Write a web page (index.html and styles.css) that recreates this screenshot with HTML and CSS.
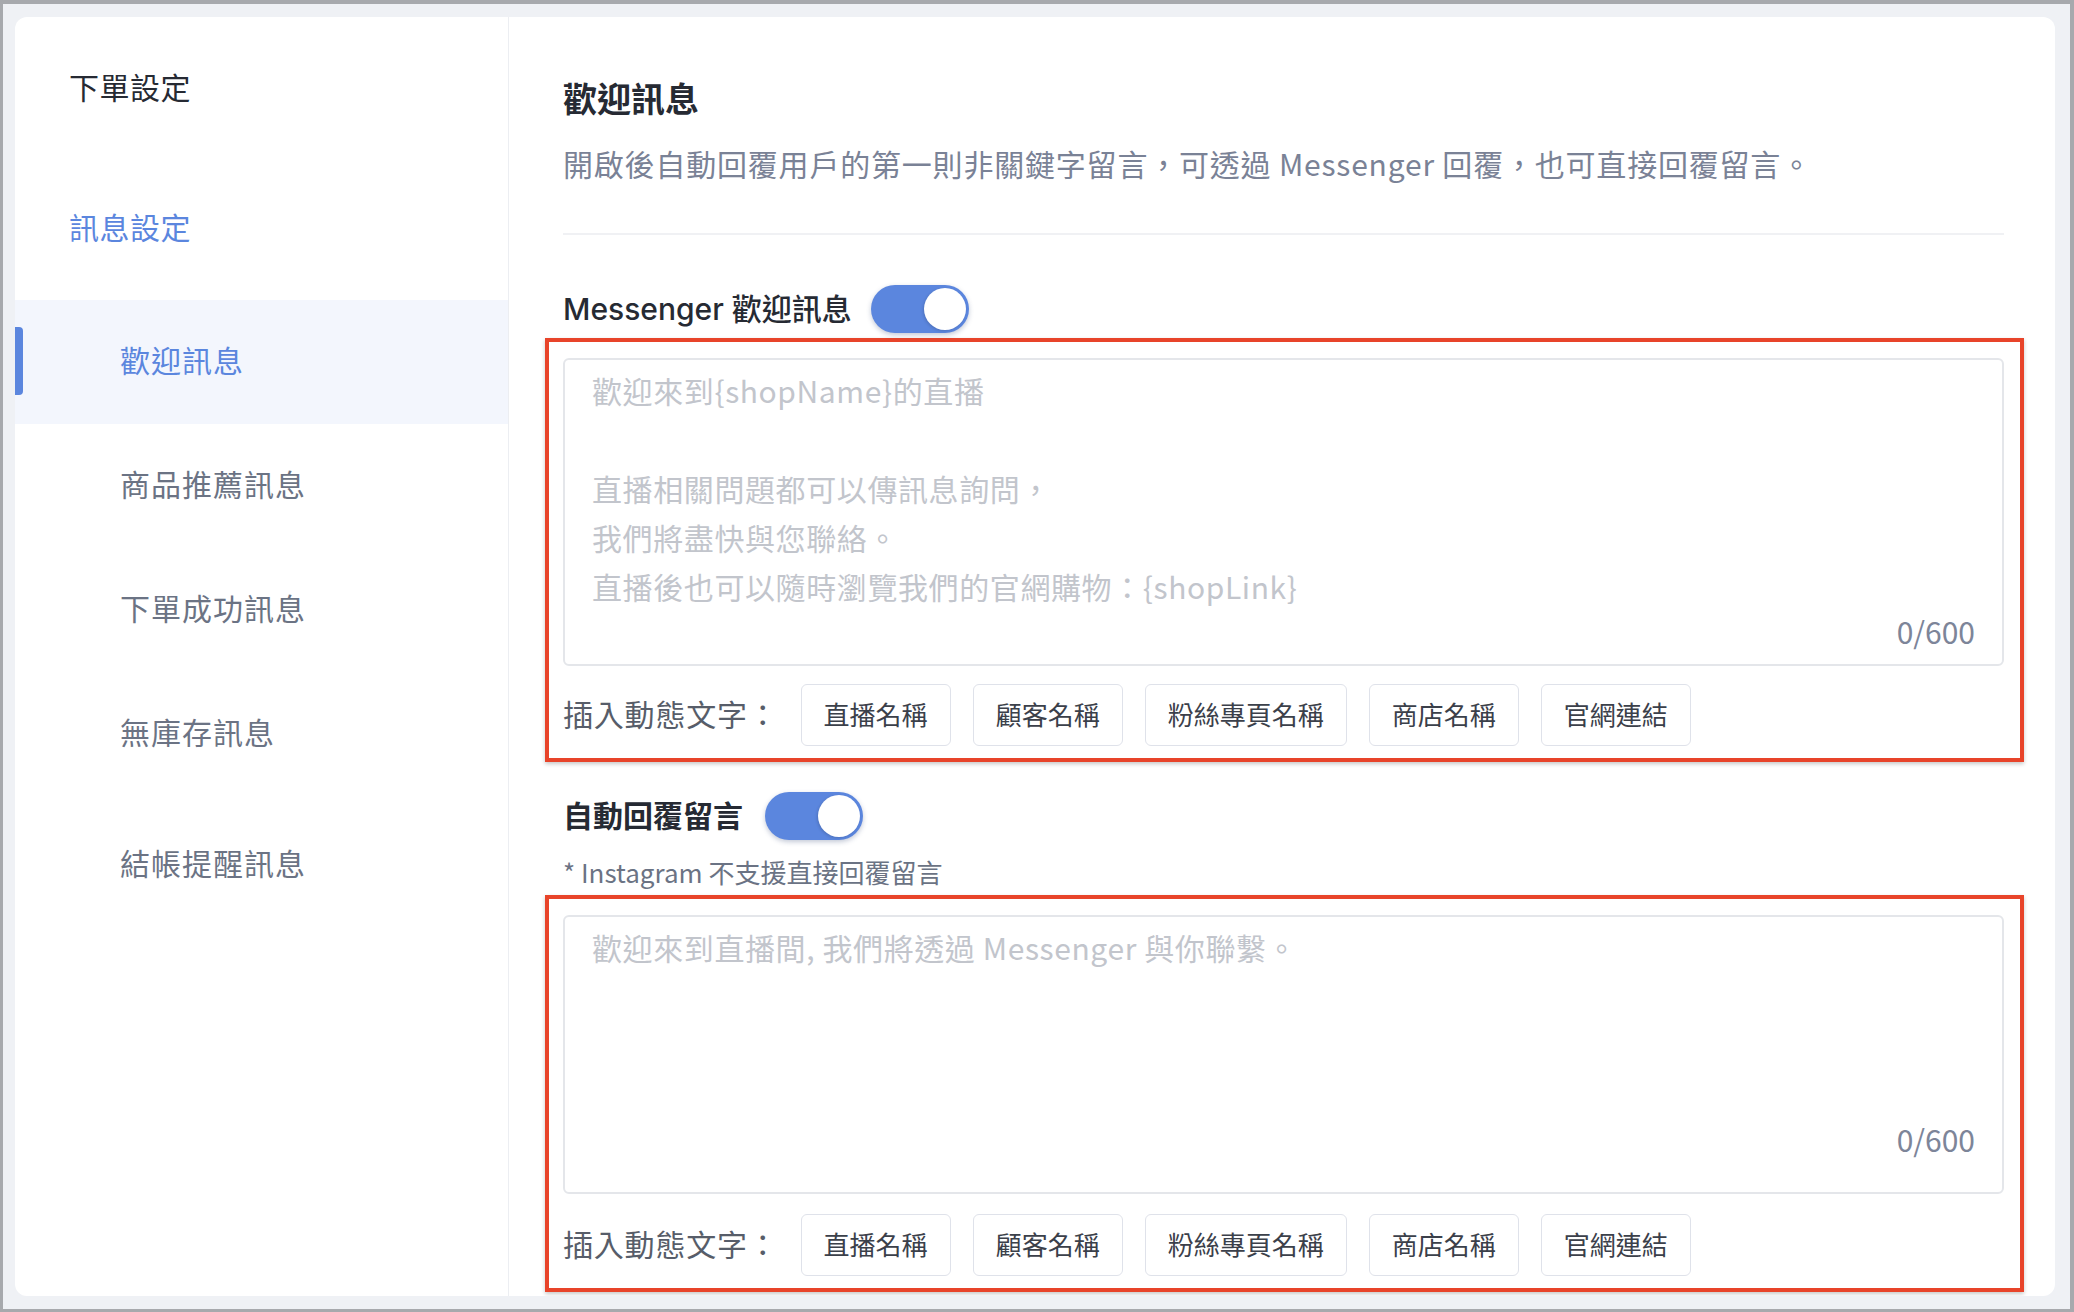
FILE: index.html
```html
<!DOCTYPE html>
<html lang="zh-Hant">
<head>
<meta charset="utf-8">
<title>訊息設定</title>
<link rel="stylesheet" href="styles.css">
</head>
<body>
<div class="frame">
  <div class="card">
    <aside class="sidebar">
      <div class="side-heading">下單設定</div>
      <div class="side-heading side-heading--active">訊息設定</div>
      <nav class="side-list">
        <div class="side-item side-item--active">歡迎訊息</div>
        <div class="side-item">商品推薦訊息</div>
        <div class="side-item">下單成功訊息</div>
        <div class="side-item">無庫存訊息</div>
        <div class="side-item side-item--last">結帳提醒訊息</div>
      </nav>
    </aside>
    <main class="main">
      <h1 class="title">歡迎訊息</h1>
      <p class="desc">開啟後自動回覆用戶的第一則非關鍵字留言，可透過 Messenger 回覆，也可直接回覆留言。</p>
      <div class="divider"></div>

      <div class="toggle-row">
        <span class="toggle-label toggle-label--latin">Messenger 歡迎訊息</span>
        <span class="switch"><span class="knob"></span></span>
      </div>
      <section class="highlight highlight--first">
        <div class="textbox">
          <div class="textbox-text">
            <div class="ph-line">歡迎來到{shopName}的直播</div>
            <div class="ph-line">&nbsp;</div>
            <div class="ph-line">直播相關問題都可以傳訊息詢問，</div>
            <div class="ph-line">我們將盡快與您聯絡。</div>
            <div class="ph-line">直播後也可以隨時瀏覽我們的官網購物：{shopLink}</div>
          </div>
          <div class="counter">0/600</div>
        </div>
        <div class="insert-row">
          <span class="insert-label">插入動態文字：</span>
          <button class="chip">直播名稱</button>
          <button class="chip">顧客名稱</button>
          <button class="chip">粉絲專頁名稱</button>
          <button class="chip">商店名稱</button>
          <button class="chip">官網連結</button>
        </div>
      </section>

      <div class="toggle-row toggle-row--second">
        <span class="toggle-label toggle-label--bold">自動回覆留言</span>
        <span class="switch"><span class="knob"></span></span>
      </div>
      <p class="note">* Instagram 不支援直接回覆留言</p>
      <section class="highlight highlight--second">
        <div class="textbox textbox--comment">
          <div class="textbox-text textbox-text--short">
            <div class="ph-line">歡迎來到直播間, 我們將透過 Messenger 與你聯繫。</div>
          </div>
          <div class="counter">0/600</div>
        </div>
        <div class="insert-row insert-row--second">
          <span class="insert-label">插入動態文字：</span>
          <button class="chip">直播名稱</button>
          <button class="chip">顧客名稱</button>
          <button class="chip">粉絲專頁名稱</button>
          <button class="chip">商店名稱</button>
          <button class="chip">官網連結</button>
        </div>
      </section>
    </main>
  </div>
</div>
</body>
</html>
```

FILE: styles.css
```css
* { box-sizing: border-box; }

html, body {
  margin: 0;
  padding: 0;
}

body {
  font-family: "Noto Sans CJK TC", "Noto Sans", sans-serif;
  color: #262a33;
}

.frame {
  width: 2074px;
  height: 1312px;
  background: #eff1f5;
  border-style: solid;
  border-color: #a7a9ad;
  border-width: 4px 4px 3px 3px;
  padding: 13px 15px 13px 12px;
}

.card {
  height: 100%;
  background: #ffffff;
  border-radius: 12px;
  overflow: hidden;
  display: flex;
}

/* ---------- sidebar ---------- */
.sidebar {
  width: 494px;
  flex: 0 0 494px;
  border-right: 1px solid #eceef2;
  padding-top: 34px;
}

.side-heading {
  height: 70px;
  line-height: 70px;
  padding-left: 54px;
  font-size: 30px;
  letter-spacing: 0.5px;
  color: #262a33;
  margin-bottom: 70px;
}

.side-heading--active {
  color: #5b86de;
  margin-bottom: 39px;
}

.side-list {
  display: flex;
  flex-direction: column;
}

.side-item {
  position: relative;
  height: 124px;
  display: flex;
  align-items: center;
  padding-left: 105px;
  padding-bottom: 6px;
  font-size: 30px;
  letter-spacing: 1px;
  color: #6b7384;
}

.side-item--last {
  padding-top: 8px;
  padding-bottom: 0;
}

.side-item--active {
  background: #f3f6fd;
  color: #5b86de;
}

.side-item--active::before {
  content: "";
  position: absolute;
  left: 0;
  top: 27px;
  width: 8px;
  height: 68px;
  background: #5b86de;
  border-radius: 0 4px 4px 0;
}

/* ---------- main ---------- */
.main {
  flex: 1;
  min-width: 0;
  padding: 57px 51px 0 54px;
}

.title {
  margin: 0;
  font-size: 34px;
  line-height: 48px;
  font-weight: 700;
  color: #262a33;
}

.desc {
  margin: 19px 0 0;
  padding-bottom: 2px;
  font-size: 30px;
  line-height: 44px;
  letter-spacing: 0.8px;
  color: #7a8296;
}

.divider {
  margin-top: 46px;
  height: 2px;
  background: #f0f1f4;
}

.toggle-row {
  margin-top: 50px;
  height: 48px;
  display: flex;
  align-items: center;
  gap: 19px;
}

.toggle-row--second {
  margin-top: 30px;
  gap: 22px;
}

.toggle-label {
  font-size: 30px;
  line-height: 48px;
  color: #262a33;
}

.toggle-label--latin {
  font-family: Inter, "Noto Sans CJK TC", sans-serif;
  font-weight: 500;
}

.toggle-label--bold {
  font-weight: 700;
  padding-bottom: 4px;
}

.switch {
  position: relative;
  width: 98px;
  height: 48px;
  border-radius: 24px;
  background: #5b86de;
  box-shadow: 0 2px 5px rgba(40, 60, 110, 0.28);
  flex: 0 0 auto;
}

.knob {
  position: absolute;
  top: 3px;
  right: 3px;
  width: 42px;
  height: 42px;
  border-radius: 50%;
  background: #ffffff;
  box-shadow: -1px 1px 3px rgba(0, 0, 0, 0.15);
}

.note {
  margin: 14px 0 0;
  font-size: 26px;
  line-height: 36px;
  color: #6b7384;
}

/* ---------- highlight annotation ---------- */
.highlight {
  margin: 5px -20px 0 -18px;
  border: 4px solid #e8442a;
  padding: 16px 16px 12px 14px;
  box-shadow: 0 2px 4px rgba(0, 0, 0, 0.22);
}

/* ---------- textbox ---------- */
.textbox {
  border: 2px solid #e4e6ea;
  border-radius: 6px;
  padding: 6px 27px 13px 27px;
}

.textbox--comment {
  padding-bottom: 33px;
}

.textbox-text {
  min-height: 245px;
}

.textbox-text--short {
  min-height: 196px;
}

.ph-line {
  font-size: 30px;
  line-height: 49px;
  letter-spacing: 0.6px;
  color: #c2c5cc;
  white-space: nowrap;
}

.counter {
  text-align: right;
  font-size: 30px;
  line-height: 40px;
  color: #7d8599;
}

/* ---------- insert row ---------- */
.insert-row {
  margin-top: 18px;
  display: flex;
  align-items: center;
  gap: 22px;
}

.insert-row--second {
  margin-top: 20px;
}

.insert-label {
  font-size: 30px;
  line-height: 44px;
  letter-spacing: 0.8px;
  padding-bottom: 5px;
  color: #575d69;
  margin-right: 0;
}

.chip {
  height: 62px;
  padding: 0 22px 4px;
  border: 1.5px solid #dfe2ea;
  border-radius: 6px;
  background: #ffffff;
  font-family: "Noto Sans CJK TC", sans-serif;
  font-size: 26px;
  color: #3b404a;
  cursor: pointer;
}
```
